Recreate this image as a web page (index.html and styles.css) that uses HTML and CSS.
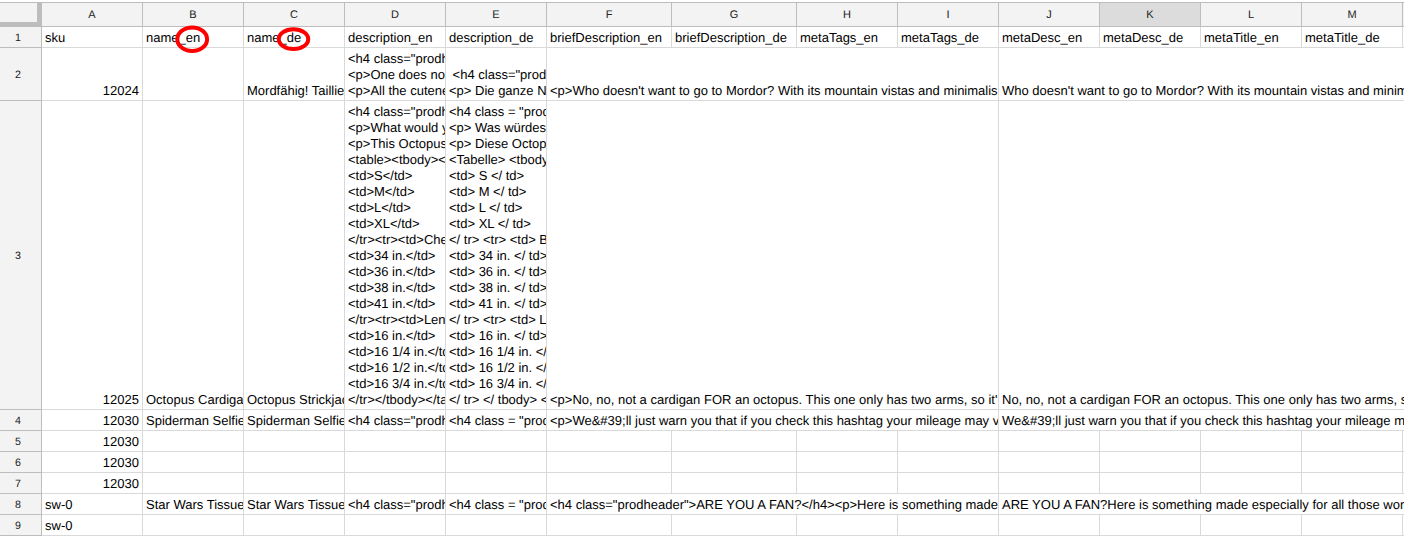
FILE: index.html
```html
<!DOCTYPE html>
<html lang="en">
<head>
<meta charset="utf-8">
<title>Product sheet</title>
<link rel="stylesheet" href="styles.css">
</head>
<body>
<div class="viewport">
<table class="sheet">
<colgroup>
<col class="col-index"><col class="col"><col class="col"><col class="col"><col class="col"><col class="col"><col class="col-wide"><col class="col-wide"><col class="col"><col class="col"><col class="col"><col class="col"><col class="col"><col class="col"><col class="col">
</colgroup>
<thead>
<tr class="letters"><th class="corner"></th><th>A</th><th>B</th><th>C</th><th>D</th><th>E</th><th>F</th><th>G</th><th>H</th><th>I</th><th>J</th><th class="active">K</th><th>L</th><th>M</th><th></th></tr>
</thead>
<tbody>
<tr class="row"><th>1</th><td>sku</td><td>name_en</td><td>name_de</td><td>description_en</td><td>description_de</td><td>briefDescription_en</td><td>briefDescription_de</td><td>metaTags_en</td><td>metaTags_de</td><td>metaDesc_en</td><td>metaDesc_de</td><td>metaTitle_en</td><td>metaTitle_de</td><td></td></tr>
<tr class="row row-medium"><th>2</th><td class="num">12024</td><td></td><td>Mordfähig! Taillie</td><td>&lt;h4 class="prodh
&lt;p&gt;One does no
&lt;p&gt;All the cutene</td><td> &lt;h4 class="prod
&lt;p&gt; Die ganze N</td><td colspan="4">&lt;p&gt;Who doesn't want to go to Mordor? With its mountain vistas and minimalis</td><td colspan="5">Who doesn't want to go to Mordor? With its mountain vistas and minim</td></tr>
<tr class="row row-tall"><th>3</th><td class="num">12025</td><td>Octopus Cardiga</td><td>Octopus Strickjac</td><td>&lt;h4 class="prodh
&lt;p&gt;What would y
&lt;p&gt;This Octopus
&lt;table&gt;&lt;tbody&gt;&lt;
&lt;td&gt;S&lt;/td&gt;
&lt;td&gt;M&lt;/td&gt;
&lt;td&gt;L&lt;/td&gt;
&lt;td&gt;XL&lt;/td&gt;
&lt;/tr&gt;&lt;tr&gt;&lt;td&gt;Che
&lt;td&gt;34 in.&lt;/td&gt;
&lt;td&gt;36 in.&lt;/td&gt;
&lt;td&gt;38 in.&lt;/td&gt;
&lt;td&gt;41 in.&lt;/td&gt;
&lt;/tr&gt;&lt;tr&gt;&lt;td&gt;Len
&lt;td&gt;16 in.&lt;/td&gt;
&lt;td&gt;16 1/4 in.&lt;/td
&lt;td&gt;16 1/2 in.&lt;/td
&lt;td&gt;16 3/4 in.&lt;/td
&lt;/tr&gt;&lt;/tbody&gt;&lt;/ta</td><td>&lt;h4 class = "prod
&lt;p&gt; Was würdes
&lt;p&gt; Diese Octop
&lt;Tabelle&gt; &lt;tbody
&lt;td&gt; S &lt;/ td&gt;
&lt;td&gt; M &lt;/ td&gt;
&lt;td&gt; L &lt;/ td&gt;
&lt;td&gt; XL &lt;/ td&gt;
&lt;/ tr&gt; &lt;tr&gt; &lt;td&gt; B
&lt;td&gt; 34 in. &lt;/ td&gt;
&lt;td&gt; 36 in. &lt;/ td&gt;
&lt;td&gt; 38 in. &lt;/ td&gt;
&lt;td&gt; 41 in. &lt;/ td&gt;
&lt;/ tr&gt; &lt;tr&gt; &lt;td&gt; L
&lt;td&gt; 16 in. &lt;/ td&gt;
&lt;td&gt; 16 1/4 in. &lt;/
&lt;td&gt; 16 1/2 in. &lt;/
&lt;td&gt; 16 3/4 in. &lt;/
&lt;/ tr&gt; &lt;/ tbody&gt; &lt;</td><td colspan="4">&lt;p&gt;No, no, not a cardigan FOR an octopus. This one only has two arms, so it'</td><td colspan="5">No, no, not a cardigan FOR an octopus. This one only has two arms, s</td></tr>
<tr class="row"><th>4</th><td class="num">12030</td><td>Spiderman Selfie</td><td>Spiderman Selfie</td><td>&lt;h4 class="prodh</td><td>&lt;h4 class = "prod</td><td colspan="4">&lt;p&gt;We&amp;#39;ll just warn you that if you check this hashtag your mileage may v</td><td colspan="5">We&amp;#39;ll just warn you that if you check this hashtag your mileage m</td></tr>
<tr class="row"><th>5</th><td class="num">12030</td><td></td><td></td><td></td><td></td><td></td><td></td><td></td><td></td><td></td><td></td><td></td><td></td><td></td></tr>
<tr class="row"><th>6</th><td class="num">12030</td><td></td><td></td><td></td><td></td><td></td><td></td><td></td><td></td><td></td><td></td><td></td><td></td><td></td></tr>
<tr class="row"><th>7</th><td class="num">12030</td><td></td><td></td><td></td><td></td><td></td><td></td><td></td><td></td><td></td><td></td><td></td><td></td><td></td></tr>
<tr class="row"><th>8</th><td>sw-0</td><td>Star Wars Tissue</td><td>Star Wars Tissue</td><td>&lt;h4 class="prodh</td><td>&lt;h4 class = "prod</td><td colspan="4">&lt;h4 class="prodheader"&gt;ARE YOU A FAN?&lt;/h4&gt;&lt;p&gt;Here is something made</td><td colspan="5">ARE YOU A FAN?Here is something made especially for all those won</td></tr>
<tr class="row"><th>9</th><td>sw-0</td><td></td><td></td><td></td><td></td><td></td><td></td><td></td><td></td><td></td><td></td><td></td><td></td><td></td></tr>
</tbody>
</table>
<svg class="marks" width="140" height="32" viewBox="0 0 140 32">
<ellipse cx="17.2" cy="16.2" rx="14.9" ry="11.8"/>
<ellipse cx="118.5" cy="16.2" rx="14.7" ry="9.9"/>
</svg>
</div>
</body>
</html>
```
FILE: styles.css
```css
body {
  margin: 0;
  background: #fff;
  font-family: "Liberation Sans", Arial, sans-serif;
}
.viewport {
  position: relative;
  box-sizing: border-box;
  width: 100vw;
  height: 536px;
  padding-top: 2px;
  overflow: hidden;
}
.sheet {
  width: 1504px;
  table-layout: fixed;
  border-collapse: separate;
  border-spacing: 0;
  text-rendering: geometricPrecision;
}
.col-index { width: 42px; }
.col { width: 101px; }
.col-wide { width: 125px; }
.sheet th,
.sheet td {
  box-sizing: border-box;
  overflow: hidden;
  white-space: pre;
}
.sheet th {
  padding: 0;
  background: #f3f3f3;
  border-right: 1px solid #bdbdbd;
  border-bottom: 1px solid #bdbdbd;
  color: #222;
  font-size: 11px;
  font-weight: normal;
  line-height: 16px;
  text-align: center;
  vertical-align: middle;
}
.letters th {
  height: 25px;
  border-top: 1px solid #bdbdbd;
}
.letters .corner {
  border-right-width: 5px;
  border-bottom-width: 5px;
}
.letters .active { background: #dcdcdc; }
.row { height: 21px; }
.row-medium { height: 53px; }
.row-tall { height: 309px; }
.sheet .row th {
  padding: 2px 5px 0 0;
  font-size: 10.67px;
}
.sheet td {
  padding: 3px 0 1px 3px;
  border-right: 1px solid #d9d9d9;
  border-bottom: 1px solid #d9d9d9;
  color: #000;
  font-size: 13px;
  line-height: 16px;
  vertical-align: bottom;
}
.sheet .num {
  padding-right: 3px;
  text-align: right;
}
/* Hand-drawn rings around the language suffixes */
.marks {
  position: absolute;
  left: 175px;
  top: 23px;
  fill: none;
  stroke: #f00;
  stroke-width: 4;
}
```
